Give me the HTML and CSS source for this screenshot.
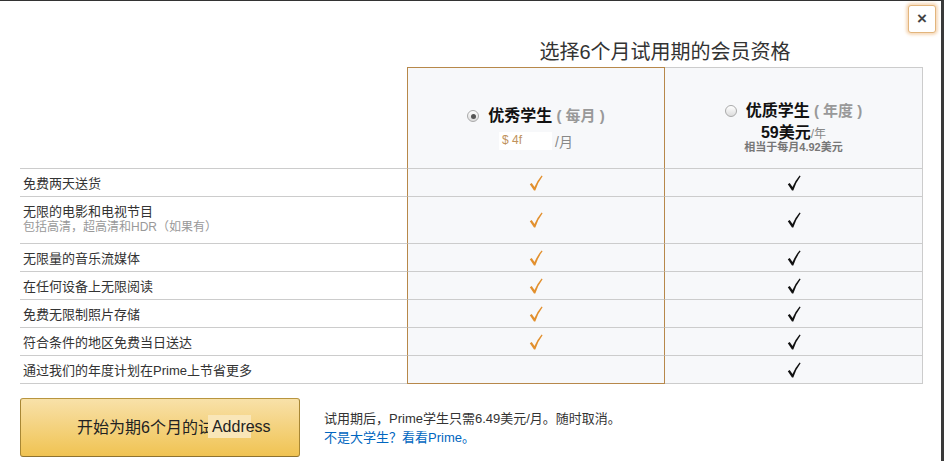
FILE: index.html
```html
<!DOCTYPE html>
<html lang="zh-CN">
<head>
<meta charset="utf-8">
<title>Prime 学生</title>
<link rel="stylesheet" href="styles.css">
</head>
<body>
<div class="modal">
  <button class="close" type="button">×</button>
  <h1 class="title">选择6个月试用期的会员资格</h1>
  <div class="plans">
    <div class="cell feat-head"></div>
    <div class="cell sel head head-sel">
      <div class="plan-name"><span class="radio on"></span><b>优秀学生</b><span class="paren"> ( 每月 )</span></div>
      <div class="price-m"><span class="mask">$ 4f</span><span class="per">/月</span></div>
    </div>
    <div class="cell alt head head-alt">
      <div class="plan-name"><span class="radio"></span><b>优质学生</b><span class="paren"> ( 年度 )</span></div>
      <div class="price-y"><b>59美元</b><span class="per-y">/年</span></div>
      <div class="equiv">相当于每月4.92美元</div>
    </div>

    <div class="cell feat">免费两天送货</div>
    <div class="cell sel mark"><svg class="chk orange" viewBox="0 0 14 16"><path d="M0.8 9.2 L2.7 8.1 L5.5 12.1 Q8.6 5 12.6 0.5 L13.6 1.3 Q9.1 7 6.3 15.5 L5 15.5 Z"/></svg></div>
    <div class="cell alt mark"><svg class="chk black" viewBox="0 0 14 16"><path d="M0.8 9.2 L2.7 8.1 L5.5 12.1 Q8.6 5 12.6 0.5 L13.6 1.3 Q9.1 7 6.3 15.5 L5 15.5 Z"/></svg></div>

    <div class="cell feat two"><span>无限的电影和电视节目</span><span class="sub">包括高清，超高清和HDR（如果有）</span></div>
    <div class="cell sel mark"><svg class="chk orange" viewBox="0 0 14 16"><path d="M0.8 9.2 L2.7 8.1 L5.5 12.1 Q8.6 5 12.6 0.5 L13.6 1.3 Q9.1 7 6.3 15.5 L5 15.5 Z"/></svg></div>
    <div class="cell alt mark"><svg class="chk black" viewBox="0 0 14 16"><path d="M0.8 9.2 L2.7 8.1 L5.5 12.1 Q8.6 5 12.6 0.5 L13.6 1.3 Q9.1 7 6.3 15.5 L5 15.5 Z"/></svg></div>

    <div class="cell feat">无限量的音乐流媒体</div>
    <div class="cell sel mark"><svg class="chk orange" viewBox="0 0 14 16"><path d="M0.8 9.2 L2.7 8.1 L5.5 12.1 Q8.6 5 12.6 0.5 L13.6 1.3 Q9.1 7 6.3 15.5 L5 15.5 Z"/></svg></div>
    <div class="cell alt mark"><svg class="chk black" viewBox="0 0 14 16"><path d="M0.8 9.2 L2.7 8.1 L5.5 12.1 Q8.6 5 12.6 0.5 L13.6 1.3 Q9.1 7 6.3 15.5 L5 15.5 Z"/></svg></div>

    <div class="cell feat">在任何设备上无限阅读</div>
    <div class="cell sel mark"><svg class="chk orange" viewBox="0 0 14 16"><path d="M0.8 9.2 L2.7 8.1 L5.5 12.1 Q8.6 5 12.6 0.5 L13.6 1.3 Q9.1 7 6.3 15.5 L5 15.5 Z"/></svg></div>
    <div class="cell alt mark"><svg class="chk black" viewBox="0 0 14 16"><path d="M0.8 9.2 L2.7 8.1 L5.5 12.1 Q8.6 5 12.6 0.5 L13.6 1.3 Q9.1 7 6.3 15.5 L5 15.5 Z"/></svg></div>

    <div class="cell feat">免费无限制照片存储</div>
    <div class="cell sel mark"><svg class="chk orange" viewBox="0 0 14 16"><path d="M0.8 9.2 L2.7 8.1 L5.5 12.1 Q8.6 5 12.6 0.5 L13.6 1.3 Q9.1 7 6.3 15.5 L5 15.5 Z"/></svg></div>
    <div class="cell alt mark"><svg class="chk black" viewBox="0 0 14 16"><path d="M0.8 9.2 L2.7 8.1 L5.5 12.1 Q8.6 5 12.6 0.5 L13.6 1.3 Q9.1 7 6.3 15.5 L5 15.5 Z"/></svg></div>

    <div class="cell feat">符合条件的地区免费当日送达</div>
    <div class="cell sel mark"><svg class="chk orange" viewBox="0 0 14 16"><path d="M0.8 9.2 L2.7 8.1 L5.5 12.1 Q8.6 5 12.6 0.5 L13.6 1.3 Q9.1 7 6.3 15.5 L5 15.5 Z"/></svg></div>
    <div class="cell alt mark"><svg class="chk black" viewBox="0 0 14 16"><path d="M0.8 9.2 L2.7 8.1 L5.5 12.1 Q8.6 5 12.6 0.5 L13.6 1.3 Q9.1 7 6.3 15.5 L5 15.5 Z"/></svg></div>

    <div class="cell feat last">通过我们的年度计划在Prime上节省更多</div>
    <div class="cell sel mark last"></div>
    <div class="cell alt mark last"><svg class="chk black" viewBox="0 0 14 16"><path d="M0.8 9.2 L2.7 8.1 L5.5 12.1 Q8.6 5 12.6 0.5 L13.6 1.3 Q9.1 7 6.3 15.5 L5 15.5 Z"/></svg></div>
  </div>

  <div class="footer">
    <button class="start" type="button">开始为期6个月的试<span class="addr">Address</span></button>
    <div class="note">
      <div>试用期后，Prime学生只需6.49美元/月。随时取消。</div>
      <a class="link" href="#">不是大学生？看看Prime。</a>
    </div>
  </div>
</div>
</body>
</html>
```

FILE: styles.css
```css
* { box-sizing: border-box; }

html, body {
  margin: 0;
  padding: 0;
  background: #fff;
}

body {
  font-family: "Liberation Sans", "Noto Sans CJK SC", sans-serif;
  color: #333;
  width: 944px;
  height: 461px;
  overflow: hidden;
}

.modal {
  position: relative;
  width: 944px;
  height: 461px;
  border-top: 1px solid #333;
  border-right: 3px solid #3a3a3a;
  padding-left: 20px;
  background: #fff;
}

.close {
  position: absolute;
  top: 4px;
  right: 5px;
  width: 28px;
  height: 28px;
  padding: 0;
  border: 1px solid #e2b57c;
  border-radius: 3px;
  background: #fff;
  box-shadow: 0 0 3px 2px rgba(228, 150, 60, 0.35);
  font-family: "Liberation Sans", sans-serif;
  font-size: 17px;
  font-weight: bold;
  line-height: 24px;
  color: #444;
}

.title {
  margin: 39px 0 3px 387px;
  width: 516px;
  font-size: 20px;
  line-height: 24px;
  font-weight: normal;
  text-align: center;
  color: #333;
}

.plans {
  display: grid;
  grid-template-columns: 387px 258px 258px;
  grid-template-rows: 101px 28px 47px 28px 28px 28px 28px 29px;
}

.cell {
  border-top: 1px solid #ccc;
}

.cell.last {
  border-bottom: 1px solid #ccc;
}

.feat-head {
  border-top: none;
}

.sel {
  background: #f7f8fa;
  border-left: 1px solid #b7884a;
  border-right: 1px solid #b7884a;
}

.sel.head {
  border-top-color: #b7884a;
}

.sel.last {
  border-bottom-color: #b7884a;
}

.alt {
  background: #f7f8fa;
  border-right: 1px solid #ccc;
}

.head {
  display: flex;
  flex-direction: column;
  align-items: center;
}

.head-sel { padding-top: 38px; }
.head-alt { padding-top: 33px; }

.plan-name {
  display: flex;
  align-items: center;
  font-size: 16px;
  line-height: 20px;
  white-space: pre;
}

.plan-name b {
  color: #111;
  margin-left: 9px;
}

.paren {
  font-size: 15px;
  font-weight: bold;
  color: #999;
}

.radio {
  display: inline-block;
  width: 12px;
  height: 12px;
  border-radius: 50%;
  border: 1px solid #aaa;
  background: linear-gradient(#fff, #dcdcdc);
  position: relative;
}

.radio.on::after {
  content: "";
  position: absolute;
  left: 2.5px;
  top: 2.5px;
  width: 5px;
  height: 5px;
  border-radius: 50%;
  background: #555;
}

.price-m {
  margin-top: 6px;
  display: flex;
  align-items: center;
  height: 18px;
}

.mask {
  display: inline-block;
  width: 53px;
  height: 18px;
  padding-left: 3px;
  background: #fff;
  font-size: 12px;
  line-height: 16px;
  color: #c0925c;
}

.per {
  margin-left: 3px;
  font-size: 14px;
  color: #888;
}

.price-y {
  margin-top: 4px;
  line-height: 16px;
}

.price-y b {
  font-size: 16px;
  color: #111;
}

.per-y {
  font-size: 12px;
  color: #888;
}

.equiv {
  font-size: 11px;
  line-height: 11px;
  font-weight: bold;
  color: #777;
}

.feat {
  display: flex;
  align-items: center;
  padding-left: 3px;
  font-size: 13px;
  color: #333;
}

.feat.two {
  flex-direction: column;
  align-items: flex-start;
  justify-content: center;
  padding-bottom: 2px;
}

.feat.two span {
  line-height: 16px;
}

.feat.two .sub {
  font-size: 12px;
  line-height: 14px;
  color: #999;
}

.mark {
  display: flex;
  align-items: center;
  justify-content: center;
}

.chk {
  width: 14px;
  height: 16px;
}

.chk.orange { fill: #e2902e; }
.chk.black { fill: #111; }

.footer {
  display: flex;
  align-items: center;
  margin-top: 14px;
}

.start {
  width: 280px;
  height: 59px;
  padding: 0 0 4px 56px;
  text-align: left;
  border: 1px solid;
  border-color: #b8953f #a88734 #8e7230;
  border-radius: 3px;
  background: linear-gradient(#f8e1a9, #f0c352);
  font-family: "Liberation Sans", "Noto Sans CJK SC", sans-serif;
  font-size: 16px;
  color: #222;
  white-space: nowrap;
}

.addr {
  display: inline-block;
  margin-left: -6px;
  padding-left: 4px;
  line-height: 23px;
  vertical-align: 1px;
  background: linear-gradient(to right, #f9e6b8 43px, transparent 43px);
}

.note {
  margin-left: 24px;
  font-size: 13px;
  line-height: 19px;
  color: #333;
}

.link {
  color: #0066c0;
  text-decoration: none;
}
```
